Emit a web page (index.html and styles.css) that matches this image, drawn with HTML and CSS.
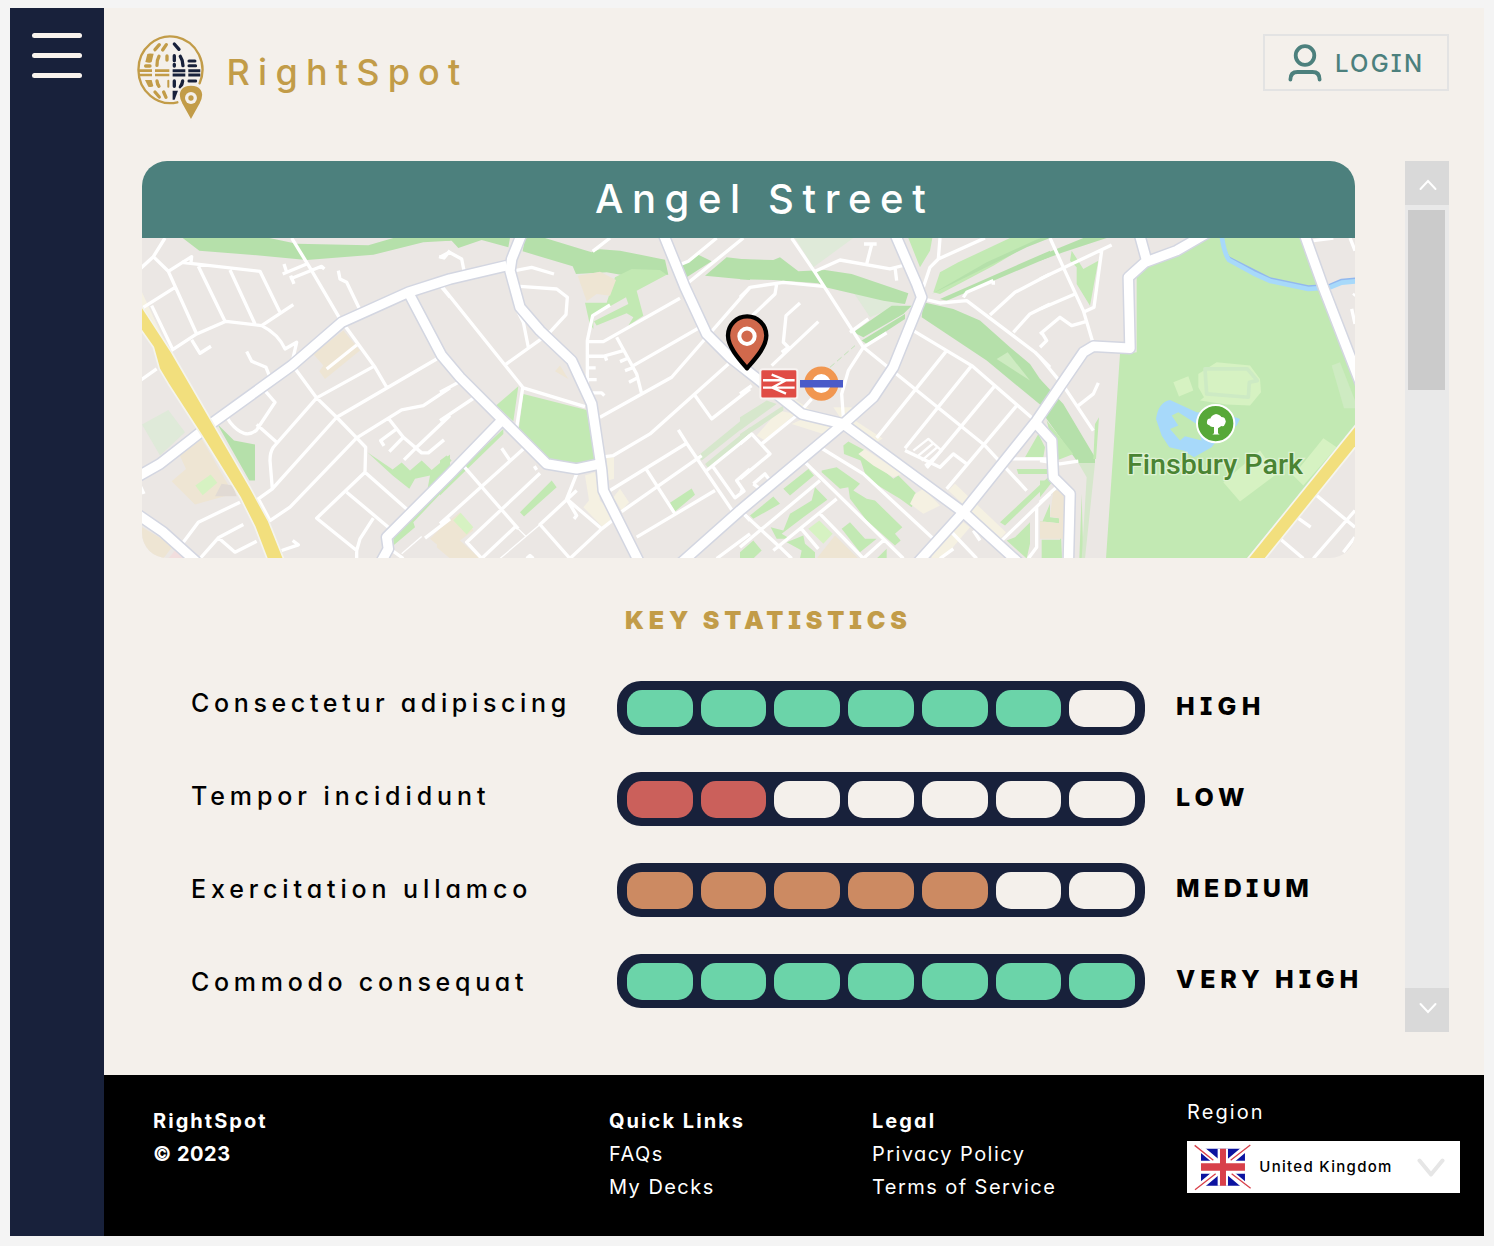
FILE: index.html
```html
<!DOCTYPE html>
<html lang="en">
<head>
<meta charset="utf-8">
<title>RightSpot</title>
<link rel="stylesheet" href="styles.css">
</head>
<body>
<div class="frame">
  <nav class="sidebar"><button class="menu" aria-label="Menu"><span></span><span></span><span></span></button></nav>
  <div class="page">
    <header class="top">
      <div class="brand">
        <svg class="logo" viewBox="50 40 205 262" fill="none" stroke-linecap="round">
          <path class="gold-line" stroke-width="7" d="M174 245A96 100 0 1 1 241 188"/>
          <g class="gold-line" stroke-width="10">
            <path d="M120 72L107 87M141 72L130 88M119 107Q112 120 113 134M143 106V118M79 136H92M113 181Q114 191 119 197" />
            <path stroke-width="6" d="M147 180V198"/>
            <path stroke-width="8" stroke-linecap="butt" d="M58 150H98M107 150H150M58 163H98M107 163H150"/>
            <path d="M107 214L120 229M133 214L140 230"/>
          </g>
          <path class="gold" d="M84 100Q87 97 103 99L97 124Q92 128 78 124ZM77 178H97L102 196Q98 201 87 198Z"/>
          <g class="navy-line" stroke-width="10">
            <path d="M165 70L179 86M165 105V120M183 107Q191 119 191 135M165 136V131M165 181V197M190 181Q189 191 183 199"/>
            <path stroke-width="9" d="M209 121H227M209 135H229M209 181H229"/>
            <path stroke-width="9" stroke-linecap="butt" d="M160 150H198M207 150H243M160 163H198M207 163H243"/>
          </g>
          <path class="navy" d="M160 210H176L166 237H160Z"/>
          <path class="gold" stroke="#f4f0eb" stroke-width="5" stroke-linecap="butt" d="M215 300L187 250C166 210 190 193 215 193S264 210 243 250Z"/>
          <circle cx="215" cy="232" r="18" fill="#f4f0eb"/><circle class="gold" cx="215" cy="232" r="8"/>
        </svg>
        <span class="brand-name">RightSpot</span>
      </div>
      <button class="login">
        <svg class="user" viewBox="0 0 34 38" fill="none" stroke="currentColor" stroke-width="3.8" stroke-linecap="round"><circle cx="17" cy="11.5" r="9.3"/><path d="M2.4 35.5C2.4 30 5.5 28 9.5 28H24.500C28.500 28 31.600 30 31.600 35.500"/></svg>
        <span>LOGIN</span>
      </button>
    </header>
    <div class="body">
      <main class="content">
        <section class="place">
          <h1>Angel Street</h1>
          <svg class="map" viewBox="6 262 3639 962" preserveAspectRatio="none">
            <defs>
              <g id="major">
                <path d="M-10 980L60 940L220 815L455 645L605 515L805 425L930 385L1100 345M805 425L905 615L960 680L1220 940L1310 955L1380 940M-10 1090L70 1145L170 1235M720 1240L745 1195L740 1160L930 970L1085 810"/>
                <path d="M1145 250L1115 325L1110 360L1140 470L1200 540L1295 630L1355 760L1385 960L1390 1020L1500 1240"/>
                <path d="M1570 250L1635 410L1700 550L1770 620L1840 675L1985 790L2110 820L2470 1085L2640 1240M1620 1240L1800 1080L2110 820L2200 740L2260 650L2345 440L2330 400L2265 250"/>
                <path d="M2330 1240L2470 1085L2690 810L2830 605L2860 587L2970 593L2965 380L3015 335L3110 300L3205 245M2998 250L3020 330M2685 815L2735 870L2740 980L2790 1030L2785 1240M3493 250L3550 410L3670 720"/>
              </g>
            </defs>
            <rect class="land" x="0" y="255" width="3660" height="980"/>
            <!-- west -->
            <path class="rail" d="M128 262L178 300L330 312L500 328L700 312L850 275L930 270V262H760L685 284L470 279L388 262ZM232 820L282 870L345 882V990H328Z"/>
            <path class="mist" d="M6 822L85 778L135 845L60 915Z"/>
            <path class="tan" d="M118 912L185 865L280 1030L165 1062L95 992L138 955ZM520 610L610 540L660 600L555 685L538 662L550 645ZM6 1130L100 1185L70 1224H6ZM870 1165L930 1105V1215Z"/>
            <path class="shade" d="M245 1000L278 1005L290 1037H225Z"/>
            <path class="pink" d="M105 1200L85 1224H140Z"/>
            <path class="cream" d="M6 425L75 575L30 500L6 465Z"/>
            <path class="lawn" d="M166 1005L212 972L232 997L188 1034Z"/>
            <path class="green" d="M682 905L758 957L785 936L810 960L845 930L875 958L930 912V1000L820 1115L825 1130L760 1185V1150L860 1030L870 975L825 985L808 1015L758 975Z"/>
            <!-- centre west -->
            <g transform="translate(900 0)">
              <path class="rail" d="M0 262H210L205 290L125 268L55 292L35 270H0ZM255 262H315L455 305L480 296L540 300L675 327L685 372L575 378L500 365L408 370L398 347L248 302ZM720 345L775 312L815 332L740 380ZM795 375L860 320L930 328V388Z"/>
              <path class="green" d="M525 380L575 355L660 358L680 372L590 420L610 495L565 525L580 500L560 488L470 525L462 512L565 460L558 440L460 495V535L448 515L435 456H500ZM250 730L440 778L465 930L400 940L320 930L235 845ZM168 765L235 707L220 812ZM240 1085L335 990L350 1010L252 1098ZM690 1057L755 1014L765 1033L705 1083ZM0 1035L190 850V835L0 1015ZM0 930L20 915L35 930L0 965ZM900 1224L930 1195V1224Z"/>
              <path class="tan" d="M413 375L480 363L528 388L510 435L470 430L440 452ZM0 1130L60 1085L100 1140L60 1170L120 1224H30L-10 1190ZM345 662L360 645L385 685Z"/>
              <path class="lawn" d="M40 1110L62 1087L100 1130L80 1152Z"/>
              <path class="cream" d="M435 975L465 965L480 1050L530 1105L490 1132L430 1070L447 1050ZM500 920H522V985L505 990ZM540 1015L567 1055L545 1080L520 1040Z"/>
              <path class="stripe" d="M775 915L930 788V815L785 930ZM795 940L930 830V850L805 952Z"/>
            </g>
            <!-- centre east -->
            <g transform="translate(1800 0)">
              <path class="mist" d="M165 262H340L220 350ZM340 425L500 455L390 500Z"/>
              <path class="rail" d="M0 325L100 328L120 320L175 362L255 358L335 370L505 428L495 460L430 450L250 408L235 398L100 388L0 386ZM550 455L640 475L720 510L810 590L870 640L930 730V762H900L740 630L545 500ZM340 545L455 465L515 465L490 490L370 560ZM365 570L495 490V505L380 580ZM600 445L930 300V318L620 450Z"/>
              <path class="green" d="M505 262H577L570 300L540 350ZM580 425L600 365L655 335L810 262H900L760 345L600 430Z"/>
              <path class="rail" d="M575 430L860 290L930 262H900L740 335Z"/>
              <path class="dash" d="M270 650L345 585"/>
              <path class="patch" d="M770 625L803 605L870 690Z"/>
              <path class="green" d="M310 885L325 873L385 905L420 950L460 985L475 975L535 1035L515 1070L480 1045L380 985L362 930L312 910ZM130 1015L205 955L222 975L150 1035ZM245 960L290 950L360 1000L340 1020L380 1045L405 1050L487 1130L465 1150L482 1170L465 1185L380 1110L330 1045L325 1010L300 1015L245 965ZM30 1095L100 1038L120 1060L40 1105ZM92 1130L130 1140L150 1090L215 1050L225 1010L262 1048L190 1100L125 1150L150 1165H110ZM0 1205L40 1170L65 1200L40 1224H0ZM140 1175L190 1155L195 1180L225 1205V1224H180L185 1200ZM305 1135L330 1115L375 1165H410L360 1205ZM410 1224L440 1195V1224ZM780 1115L930 975V995L795 1125ZM830 955H925V970H835ZM855 920L895 850L915 890L910 920ZM800 1170L825 1160L870 1115V1180L860 1224Z"/>
              <path class="lawn" d="M205 1135L238 1110L278 1150L250 1180Z"/>
              <path class="tan" d="M230 1224L285 1155L355 1224Z"/>
              <path class="cream" d="M50 855L115 780L165 790L75 870ZM155 820L200 800L280 825L250 850ZM280 770H335L345 810L428 864L410 875L300 800ZM155 740L215 780L185 790ZM355 910L375 895L485 970L460 980L400 945ZM525 1030L550 1015L600 1065L550 1090L510 1060ZM625 1020L645 1000L798 1145L780 1165L690 1080ZM575 1210L670 1115L690 1130L610 1224H575Z"/>
              <path class="stripe" d="M0 800L80 750L110 760L0 840ZM0 850L130 765V780L0 868Z"/>
            </g>
            <!-- east -->
            <g transform="translate(2700 0)">
              <path class="rail" d="M0 315L130 262H200L70 305L0 330ZM0 685L70 760L165 920V937H115L20 805L0 770Z"/>
              <path class="green" d="M95 300L130 355L175 330L162 400L150 465L110 400L110 350L90 330ZM20 810L100 910L50 930ZM0 990H40L0 1040ZM0 1130L30 1060L30 1100L57 1103V1118L0 1112ZM5 1224V1168H60L62 1130L66 1224ZM125 1030L130 1224H118ZM165 820L177 800L168 925H160Z"/>
              <path class="tan" d="M40 1020H75V1165H0V1112L57 1118V1103L30 1098Z"/>
              <path class="stripe" d="M115 937H165L135 1224H125L140 980Z"/>
              <path class="green" d="M497 262H790L945 680V830L620 1224H198L240 610L290 605V380L320 345L410 315Z"/>
              <path class="patch" d="M875 645L900 635L945 750V773H912Z"/>
              <path class="lawn" d="M475 670L530 635L630 645L660 685L663 725L630 765L560 762L480 750L492 740L475 710ZM400 695L445 677L460 720L417 738ZM550 995L660 900L710 970L600 1053ZM760 975L850 863L890 890L790 1005Z"/>
              <path class="track" d="M495 655H622L652 690L628 695L625 740L500 730Z"/>
              <path class="stream-edge" d="M545 255Q553 310 567 323L690 385L805 409L870 404L905 389L960 384"/>
              <path class="stream" d="M545 255Q553 310 567 328L640 368L690 391L805 415L870 410L905 396L960 391"/>
              <path class="lake" d="M348 805Q355 755 390 748L470 785L560 790L600 805L590 825L530 870L515 890L462 920L430 900L388 890L365 855Z"/>
              <path class="green" d="M395 795L415 785L470 820L485 870L435 857L420 870L390 835L415 825Z"/>
            </g>
            <g class="minor">
              <path d="M75 262L40 318L85 362L170 550M40 318L0 355M85 362L155 318L153 335M125 335L360 362L420 485M175 347L255 512M270 358L345 520M105 410L10 470M35 465L100 600M90 602L170 550L258 512L365 525L460 462M365 525Q415 550 435 595L470 575L455 640L530 742L590 800L650 862L677 890L675 965L530 1103L650 1200V1224M455 262L515 360L600 505L705 650L740 710M428 370L500 340M450 385L545 347L553 355M432 340L440 365M452 375L462 400M595 360L600 385L620 395L660 478M320 603L335 632L378 650L390 680M155 568L180 608L213 587M650 583L560 655M700 648L530 742L400 890Q390 905 390 930L397 1015L590 800L890 625M370 715L405 755L350 838Q315 870 270 815L258 795M350 822L410 875M397 1015L355 1045L390 1110L450 1070L650 862L785 778L850 765L930 712M745 803L790 860L845 907H865L912 868M830 890L930 795M770 835L722 870L732 886M790 860L748 903M835 885L792 928M675 965L805 1080M620 1025L745 1130M700 1103L660 1165L650 1200M0 690L50 655M130 1175L175 1115L300 1055M180 1224L235 1162L310 1122M235 1162L285 1205L350 1172M425 1200L475 1183L458 1170M0 1005L12 1030M855 1163L930 1105M750 1195L790 1224M897 318L912 322L930 300M905 410L930 440"/>
              <path class="lane" d="M785 1210L845 1158"/>
              <g transform="translate(900 0)"><path d="M0 320L28 305L65 325L72 360M458 302L510 262M225 360L275 350L342 370M240 407L350 415L382 440L378 492L325 550L195 643M0 400L250 712L435 768M248 712L230 830M225 465L250 515L265 590M0 725L65 690M0 810L105 740M510 463L458 495L442 570V735M442 573H490L720 443M442 617H490L550 600M495 615L500 630M530 560L590 670L605 730M540 633L565 622M555 660L582 650M567 695L590 683M442 652H467M442 687H470M442 727H485L493 735M580 645L775 533M480 800L695 680L930 410M495 918L520 915L630 850L865 640M765 735L815 805L930 715M510 1020L740 878M620 958L705 1090M545 1083L785 915M590 1160L825 1020M715 838L740 878L880 1085M800 960L930 855M820 950L885 1042L912 1022L890 990L930 955M65 940L235 1135M0 1120L250 895M185 893L210 930M290 958L283 947M300 968L80 1175L125 1224L230 1125M410 970L380 1045L410 1095L402 1105M380 1045L485 1135L390 1224L300 1122L410 1020M485 1135L530 1100M720 342L745 332L830 262M740 400L910 262M910 1088L930 1110M830 1224L930 1150M260 1224L270 1215L280 1224"/><path class="lane" d="M235 1135L258 1158M300 1122L180 1224"/></g>
              <g transform="translate(1800 0)"><path d="M155 262L225 365L370 590L735 885L860 1020M225 362L300 328L450 355L495 343M372 280H410M395 282L380 340M465 350L470 390M600 262L595 325L570 350L550 410M595 325L735 262M550 445L600 457L680 450L885 605L930 650M670 440L680 425L760 390M760 390V402M750 493L825 425L930 370M820 545L870 490L930 460M0 440L30 410L130 395L250 407M0 530L105 430L110 400M180 457L138 495L130 575L145 590L125 605M235 513L95 645M330 545L385 505M370 590L440 547M370 590L325 660L305 730L310 800M520 540L695 645L885 810M620 600L410 862M695 645L495 893M765 705L560 952M830 765L620 1015M495 900L600 950L640 910L680 940M0 730L35 705M0 880L35 850L90 910L0 985M65 880L170 795L215 745M240 890L370 970L580 1165M195 935L490 1224M240 990L0 1190M290 1045L100 1200M240 1090L370 1224M180 1130L235 1195M0 1080L120 1190L155 1224M430 1170L370 1224M40 1000L75 970L90 990M40 1000L60 1015M0 1020L10 1025M630 1140L710 1224M800 925H930M780 1175L930 1030M890 1070V1190L865 1224M700 1140L720 1170M600 1224L640 1195"/><path class="alley" d="M520 900L565 865L605 900L555 945M535 915L580 878M545 930L592 890"/></g>
              <g transform="translate(2700 0)"><path d="M0 385L215 283M30 262L70 350L130 480L160 580M0 475L105 430M185 300L162 470L130 485M0 550L60 500L95 525L140 512M0 590L20 570L5 545M0 620L70 705L160 840M115 765L160 730L175 697M0 930L60 940L115 932M0 1055L60 1000M830 1035L945 1130M945 1080L820 1224M770 1100L812 1130M720 1165L790 1224M910 1205L945 1160M820 270L880 262M930 262L945 300M945 430L940 435M935 475L945 520"/></g>
            </g>
            <use href="#major" class="casing"/>
            <use href="#major" class="major"/>
            <path class="a-road" d="M-6 525V450L95 605L330 1010L385 1110L437 1240H387L345 1130L300 1040L185 855L85 700L58 655L40 590Z"/>
            <path class="a-road-edge" d="M3665 834L3337 1240"/>
            <path class="a-road-line" d="M3665 834L3337 1240"/>
            <!-- park marker -->
            <circle cx="3227" cy="819" r="56" fill="#57a838" stroke="#fff" stroke-width="6"/>
            <path fill="#fff" d="M3222 848V829Q3212 831 3208 824Q3199 823 3201 813Q3202 803 3211 804Q3214 793 3228 790Q3241 793 3244 799Q3255 799 3256 808Q3259 811 3256 818Q3252 830 3244 826L3234 833V848L3239 852H3217Z"/>
            <text class="park-name" x="2961" y="970" textLength="528" lengthAdjust="spacingAndGlyphs">Finsbury Park</text>
            <!-- stations -->
            <rect x="1861" y="656" width="111" height="88" rx="7" fill="#e04c45" stroke="#f7f3f1" stroke-width="6"/>
            <path fill="none" stroke="#fff" stroke-width="7" d="M1869 689H1964M1869 711H1964M1895 672L1938 689L1897 711L1938 729"/>
            <circle cx="2044" cy="699" r="40" fill="#fff" stroke="#f19751" stroke-width="23"/>
            <path d="M1980 688H2109V711H1980Z" fill="#4a5bc9"/>
            <!-- location pin -->
            <path d="M1821 653C1795 623 1764 588 1764 555A57 57 0 0 1 1879 555C1879 588 1847 623 1821 653Z" fill="#d1694c" stroke="#000" stroke-width="13"/>
            <circle cx="1821" cy="557" r="23" fill="none" stroke="#fff" stroke-width="12"/>
          </svg>
        </section>
        <section class="stats">
          <h2>KEY STATISTICS</h2>
          <div class="stat-grid">
            <div class="labels"><span class="l1">Consectetur adipiscing</span><span class="l2">Tempor incididunt</span><span class="l3">Exercitation ullamco</span><span class="l4">Commodo consequat</span></div>
            <div class="meters">
              <div class="meter good"><i class="on"></i><i class="on"></i><i class="on"></i><i class="on"></i><i class="on"></i><i class="on"></i><i></i></div>
              <div class="meter bad"><i class="on"></i><i class="on"></i><i></i><i></i><i></i><i></i><i></i></div>
              <div class="meter fair"><i class="on"></i><i class="on"></i><i class="on"></i><i class="on"></i><i class="on"></i><i></i><i></i></div>
              <div class="meter good"><i class="on"></i><i class="on"></i><i class="on"></i><i class="on"></i><i class="on"></i><i class="on"></i><i class="on"></i></div>
            </div>
            <div class="ratings"><span class="r1">HIGH</span><span class="r2">LOW</span><span class="r3">MEDIUM</span><span class="r4">VERY HIGH</span></div>
          </div>
        </section>
      </main>
      <div class="scrollbar">
        <div class="arrow"><svg viewBox="0 0 18 12"><path d="M1.500 10L9 2L16.500 10"/></svg></div>
        <div class="thumb"></div>
        <div class="arrow end"><svg viewBox="0 0 18 12"><path d="M1.500 2L9 10L16.500 2"/></svg></div>
      </div>
    </div>
    <footer class="footer">
      <div class="col about"><b>RightSpot</b><b class="year">© 2023</b></div>
      <div class="col links"><b>Quick Links</b><a>FAQs</a><a>My Decks</a></div>
      <div class="col legal"><b>Legal</b><a>Privacy Policy</a><a>Terms of Service</a></div>
      <div class="region">
        <span class="region-label">Region</span>
        <div class="select">
          <svg class="flag" viewBox="0 0 172 140">
            <path fill="#0c13a0" d="M21 14H153V125H21Z"/>
            <path stroke="#fff" stroke-width="20" d="M21 14L153 125M153 14L21 125"/>
            <path fill="#fff" d="M71 14H102V125H71ZM21 50H153V89H21Z"/>
            <path fill="#d8404a" d="M78 14H96V125H78ZM21 58H153V80H21Z"/>
            <path fill="none" stroke="#d8404a" stroke-width="4" d="M2 4L58 49M169 3L110 49M3 137L65 89M170 133L113 89"/>
          </svg>
          <span class="country">United Kingdom</span>
          <svg class="chevron" viewBox="0 0 28 20"><path d="M2.500 2.500L14 16.500L25.500 2.500"/></svg>
        </div>
      </div>
    </footer>
  </div>
</div>
</body>
</html>
```
FILE: styles.css
```css
* { box-sizing: border-box; }
body {
  margin: 0;
  padding: 7.5px 10px 10px;
  height: 1246px;
  overflow: hidden;
  background: #f4f4f4;
  font-family: Inter, Lato, "Liberation Sans", sans-serif;
  font-feature-settings: "cv08" 1, "cv11" 1;
  white-space: nowrap;
  color: #000;
}
button { font: inherit; font-feature-settings: inherit; background: none; border: 0; padding: 0; }
.frame { display: flex; height: 1228.500px; background: #f4f0eb; }
.sidebar { width: 94px; background: #18213b; padding: 25.500px 22px; }
.menu { display: flex; flex-direction: column; gap: 15.500px; width: 50px; }
.menu span { height: 4.500px; border-radius: 3px; background: #f8f3ed; }
.page { flex: 1; display: flex; flex-direction: column; }

.top { height: 153.500px; display: flex; justify-content: space-between; align-items: flex-start; padding: 26px 35px 0 32.300px; }
.brand { display: flex; gap: 22px; }
.logo { width: 68.300px; height: 87.300px; }
.brand-name { font-size: 36px; font-weight: 500; line-height: 44px; padding-top: 16px; letter-spacing: 8.200px; color: #c29c48; }
.gold { fill: #c29c48; }
.navy { fill: #18213b; }
.gold-line { stroke: #c29c48; }
.navy-line { stroke: #18213b; }
.login { display: flex; align-items: center; gap: 13px; width: 186px; height: 57px; border: 2px solid #e3e3e3; padding: 2px 0 0 23px; color: #4c807d; font-size: 24px; font-weight: 500; letter-spacing: 2.200px; }
.user { width: 34px; height: 38px; }

.body { height: 914px; display: flex; align-items: flex-start; gap: 50px; padding: 0 35px 0 38px; }
.content { width: 1213px; }
.place { height: 397px; border-radius: 25px; overflow: hidden; }
.place h1 { margin: 0; height: 76.500px; line-height: 76px; background: #4c807d; color: #fff; font-size: 40px; font-weight: 500; letter-spacing: 8.600px; padding-left: 453px; }
.map { display: block; width: 1213px; height: 320.500px; }
.map path { stroke-linejoin: round; }
.land { fill: #ebe7e4; }
.rail { fill: #b5e0aa; }
.green { fill: #c2e9b3; }
.mist { fill: #dfead9; }
.stripe { fill: #d6e7cc; }
.patch { fill: #ceebc2; }
.lawn { fill: #d6f2c2; }
.tan { fill: #eee5d3; }
.cream { fill: #f5f1e2; }
.pink { fill: #f2dede; }
.shade { fill: #e1dad4; }
.lake { fill: #a7d9fa; }
.track { fill: none; stroke: #cdeac4; stroke-width: 11; }
.stream { fill: none; stroke: #a7d9fa; stroke-width: 14; }
.stream-edge { fill: none; stroke: #92b8ee; stroke-width: 10; }
.dash { stroke: #c2e2b8; stroke-width: 3; stroke-dasharray: 18 10; }
.minor { fill: none; stroke: #fff; stroke-width: 10; }
.lane { stroke-width: 4; }
.alley { stroke-width: 7; }
.casing { fill: none; stroke: #d3d6e1; stroke-width: 37; }
.major { fill: none; stroke: #fff; stroke-width: 28; }
.a-road { fill: #f2df7d; stroke: #f4f4ee; stroke-width: 5; }
.a-road-edge { fill: none; stroke: #f5f5f0; stroke-width: 46; }
.a-road-line { fill: none; stroke: #f2df7d; stroke-width: 36; }
.park-name { font-family: Roboto, sans-serif; font-size: 84px; font-weight: 500; fill: #4a8433; stroke: #dff3d3; stroke-width: 8; paint-order: stroke; }

.stats h2 { margin: 46px 0 0; line-height: 32px; padding-left: 483px; font-size: 25px; font-weight: 900; letter-spacing: 4.800px; color: #c29c48; }
.stat-grid { display: flex; padding-left: 49px; margin-top: 45px; font-size: 25px; line-height: 30px; }
.labels { flex: none; width: 426px; display: flex; flex-direction: column; gap: 63.100px; padding-top: 7px; font-weight: 500; }
.l1 { letter-spacing: 4.650px; }
.l2 { letter-spacing: 4.900px; }
.l3 { letter-spacing: 4.900px; }
.l4 { letter-spacing: 4.700px; }
.meters { flex: none; display: flex; flex-direction: column; gap: 37.100px; width: 528px; }
.meter { height: 54px; display: flex; gap: 8px; padding: 9px 10px 8px; background: #18213b; border-radius: 24px; }
.meter i { flex: 1; background: #f4f0eb; border-radius: 15px; }
.good .on { background: #6bd4a9; }
.bad .on { background: #cb605b; }
.fair .on { background: #cc8a62; }
.ratings { flex: none; display: flex; flex-direction: column; gap: 61.100px; padding: 10px 0 0 31px; font-weight: 800; }
.r1 { letter-spacing: 5.300px; }
.r2 { letter-spacing: 5px; }
.r3 { letter-spacing: 4.400px; }
.r4 { letter-spacing: 4.900px; }

.scrollbar { flex: none; width: 44px; height: 871px; background: #e9e9e9; display: flex; flex-direction: column; align-items: flex-start; }
.arrow { width: 44px; height: 44px; background: #d9d9d9; display: flex; align-items: center; justify-content: center; padding: 3px 0 0 1px; }
.arrow svg { width: 18px; height: 12px; fill: none; stroke: #fff; stroke-width: 2; stroke-linecap: round; }
.arrow.end { margin-top: auto; padding: 0 0 4px 1px; }
.thumb { width: 37px; height: 180px; margin: 5px 0 0 3px; background: #cbcbcb; }

.footer { flex: 1; background: #000; color: #fff; display: flex; padding-left: 49px; font-size: 20px; letter-spacing: 1.450px; }
.col { display: flex; flex-direction: column; padding-top: 30px; line-height: 32.900px; }
.col b { font-weight: 700; letter-spacing: 2.050px; }
.col .year { letter-spacing: .5px; }
.about { width: 456px; }
.links { width: 263px; }
.legal { width: 315px; }
.region { padding-top: 21px; }
.region-label { display: block; line-height: 32px; letter-spacing: 2.100px; }
.select { margin-top: 12.500px; width: 273px; height: 52px; background: #fff; color: #000; display: flex; align-items: center; padding-left: 7px; }
.flag { width: 57.300px; height: 46.700px; margin-top: 2px; }
.country { margin-left: 8px; width: 158px; padding-bottom: 1px; font-size: 15px; font-weight: 500; letter-spacing: 1.300px; }
.chevron { width: 28px; height: 20px; margin-top: 2px; fill: none; stroke: #e6e6e6; stroke-width: 4; stroke-linecap: round; stroke-linejoin: round; }
```
